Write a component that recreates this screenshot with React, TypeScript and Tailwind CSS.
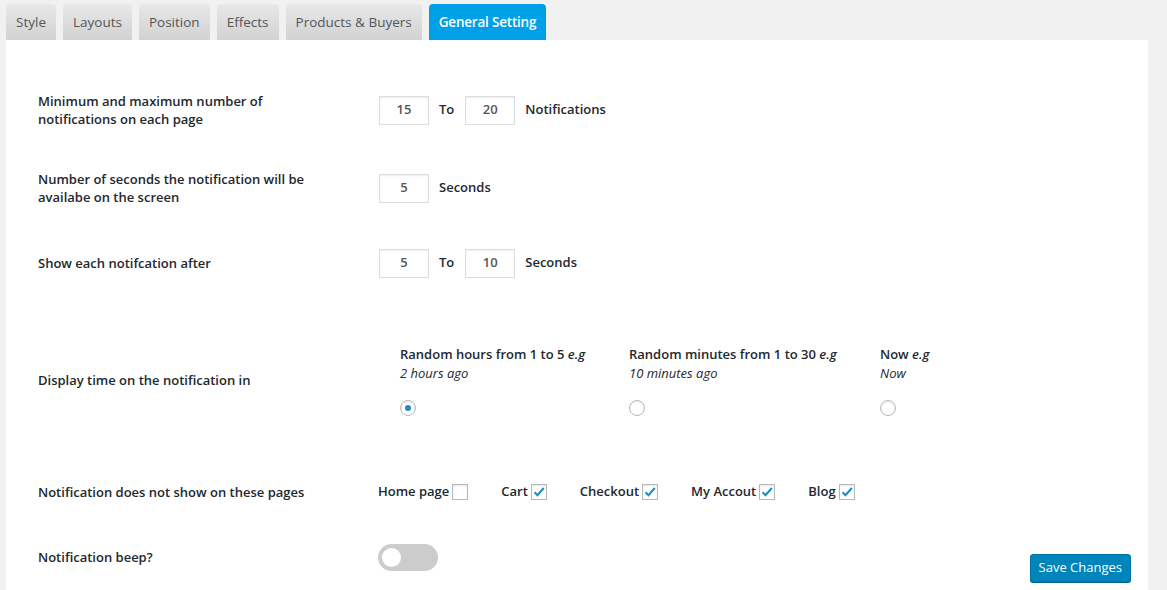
import React from 'react';

const TABS = ['Style', 'Layouts', 'Position', 'Effects', 'Products & Buyers', 'General Setting'];

const FONT = { fontFamily: '"Open Sans", "Noto Sans", Arial, sans-serif' };

function NumberBox({ value }: { value: string }) {
  return (
    <div className="w-[50px] h-[29px] bg-white border border-[#dddddd] shadow-[inset_0_1px_2px_rgba(0,0,0,0.07)] flex items-center justify-center text-[13px] text-[#555]">
      {value}
    </div>
  );
}

function Radio({ checked }: { checked?: boolean }) {
  return (
    <div className="w-4 h-4 rounded-full border border-[#b4b9be] bg-white shadow-[inset_0_1px_2px_rgba(0,0,0,0.1)] flex items-center justify-center">
      {checked && <div className="w-[6px] h-[6px] rounded-full bg-[#1e8cbe]" />}
    </div>
  );
}

function Checkbox({ checked }: { checked?: boolean }) {
  return (
    <div className="w-4 h-4 border border-[#b4b9be] bg-white shadow-[inset_0_1px_2px_rgba(0,0,0,0.1)] flex items-center justify-center">
      {checked && (
        <svg width="14" height="14" viewBox="0 0 14 14" fill="none">
          <path d="M2.5 7.2 L5.5 10.2 L11.8 3" stroke="#1e8cbe" strokeWidth="2" />
        </svg>
      )}
    </div>
  );
}

function Label({ children }: { children: React.ReactNode }) {
  return <div className="w-[341px] pr-[60px] text-[13px] leading-[18px] font-semibold text-[#23282d]">{children}</div>;
}

export default function App() {
  const pages = [
    { label: 'Home page', checked: false },
    { label: 'Cart', checked: true },
    { label: 'Checkout', checked: true },
    { label: 'My Accout', checked: true },
    { label: 'Blog', checked: true },
  ];

  return (
    <div className="w-[1167px] h-[590px] bg-[#f1f1f1] overflow-hidden" style={FONT}>
      <div className="flex gap-[7px] pl-[6px] pt-[4px] h-[40px]">
        {TABS.map((t) => {
          const active = t === 'General Setting';
          return (
            <div
              key={t}
              className={`px-[10px] h-[36px] flex items-center rounded-t-[4px] text-[13.5px] ${
                active
                  ? 'bg-[#00a0e9] text-white font-semibold tracking-[-0.2px]'
                  : 'bg-gradient-to-b from-[#e8e8e8] to-[#d2d2d2] text-[#555]'
              }`}
            >
              {t}
            </div>
          );
        })}
      </div>

      <div className="ml-[6px] w-[1142px] h-[550px] bg-white pl-[32px] pt-[40px]">
        <div className="flex items-center h-[60px]">
          <Label>Minimum and maximum number of notifications on each page</Label>
          <div className="flex items-center gap-[10px] text-[13px] font-semibold text-[#23282d]">
            <NumberBox value="15" />
            <span className="pr-[1px]">To</span>
            <NumberBox value="20" />
            <span>Notifications</span>
          </div>
        </div>

        <div className="flex items-center h-[96px]">
          <Label>Number of seconds the notification will be availabe on the screen</Label>
          <div className="flex items-center gap-[10px] text-[13px] font-semibold text-[#23282d]">
            <NumberBox value="5" />
            <span>Seconds</span>
          </div>
        </div>

        <div className="flex items-center h-[54px]">
          <Label>Show each notifcation after</Label>
          <div className="flex items-center gap-[10px] text-[13px] font-semibold text-[#23282d]">
            <NumberBox value="5" />
            <span className="pr-[1px]">To</span>
            <NumberBox value="10" />
            <span>Seconds</span>
          </div>
        </div>

        <div className="flex items-center h-[180px]">
          <Label>Display time on the notification in</Label>
          <div className="flex pl-[21px] text-[13px] text-[#23282d]">
            {[
              { title: 'Random hours from 1 to 5', sub: '2 hours ago', w: 'w-[229px]', checked: true },
              { title: 'Random minutes from 1 to 30', sub: '10 minutes ago', w: 'w-[251px]', checked: false },
              { title: 'Now', sub: 'Now', w: 'w-[120px]', checked: false },
            ].map((o) => (
              <div key={o.title} className={o.w}>
                <div className="leading-[19px] font-semibold">
                  {o.title} <em className="font-semibold">e.g</em>
                </div>
                <div className="leading-[19px] italic">{o.sub}</div>
                <div className="mt-[17px]">
                  <Radio checked={o.checked} />
                </div>
              </div>
            ))}
          </div>
        </div>

        <div className="flex items-center h-[44px]">
          <Label>Notification does not show on these pages</Label>
          <div className="flex items-center gap-[33px] -ml-[1px] text-[13px] font-semibold text-[#23282d]">
            {pages.map((p) => (
              <div key={p.label} className="flex items-center gap-[3px]">
                <span>{p.label}</span>
                <Checkbox checked={p.checked} />
              </div>
            ))}
          </div>
        </div>

        <div className="flex items-center h-[86px] pr-[17px]">
          <Label>Notification beep?</Label>
          <div className="-ml-[1px] w-[60px] h-[27px] rounded-full bg-[#cccccc] flex items-center pl-[4px]">
            <div className="w-[19px] h-[19px] rounded-full bg-white" />
          </div>
          <button className="ml-auto mt-[22px] h-[28px] px-[8px] rounded-[3px] bg-[#0085ba] border border-[#0073aa] shadow-[0_1px_0_#006799] text-white text-[13px]">
            Save Changes
          </button>
        </div>
      </div>
    </div>
  );
}
